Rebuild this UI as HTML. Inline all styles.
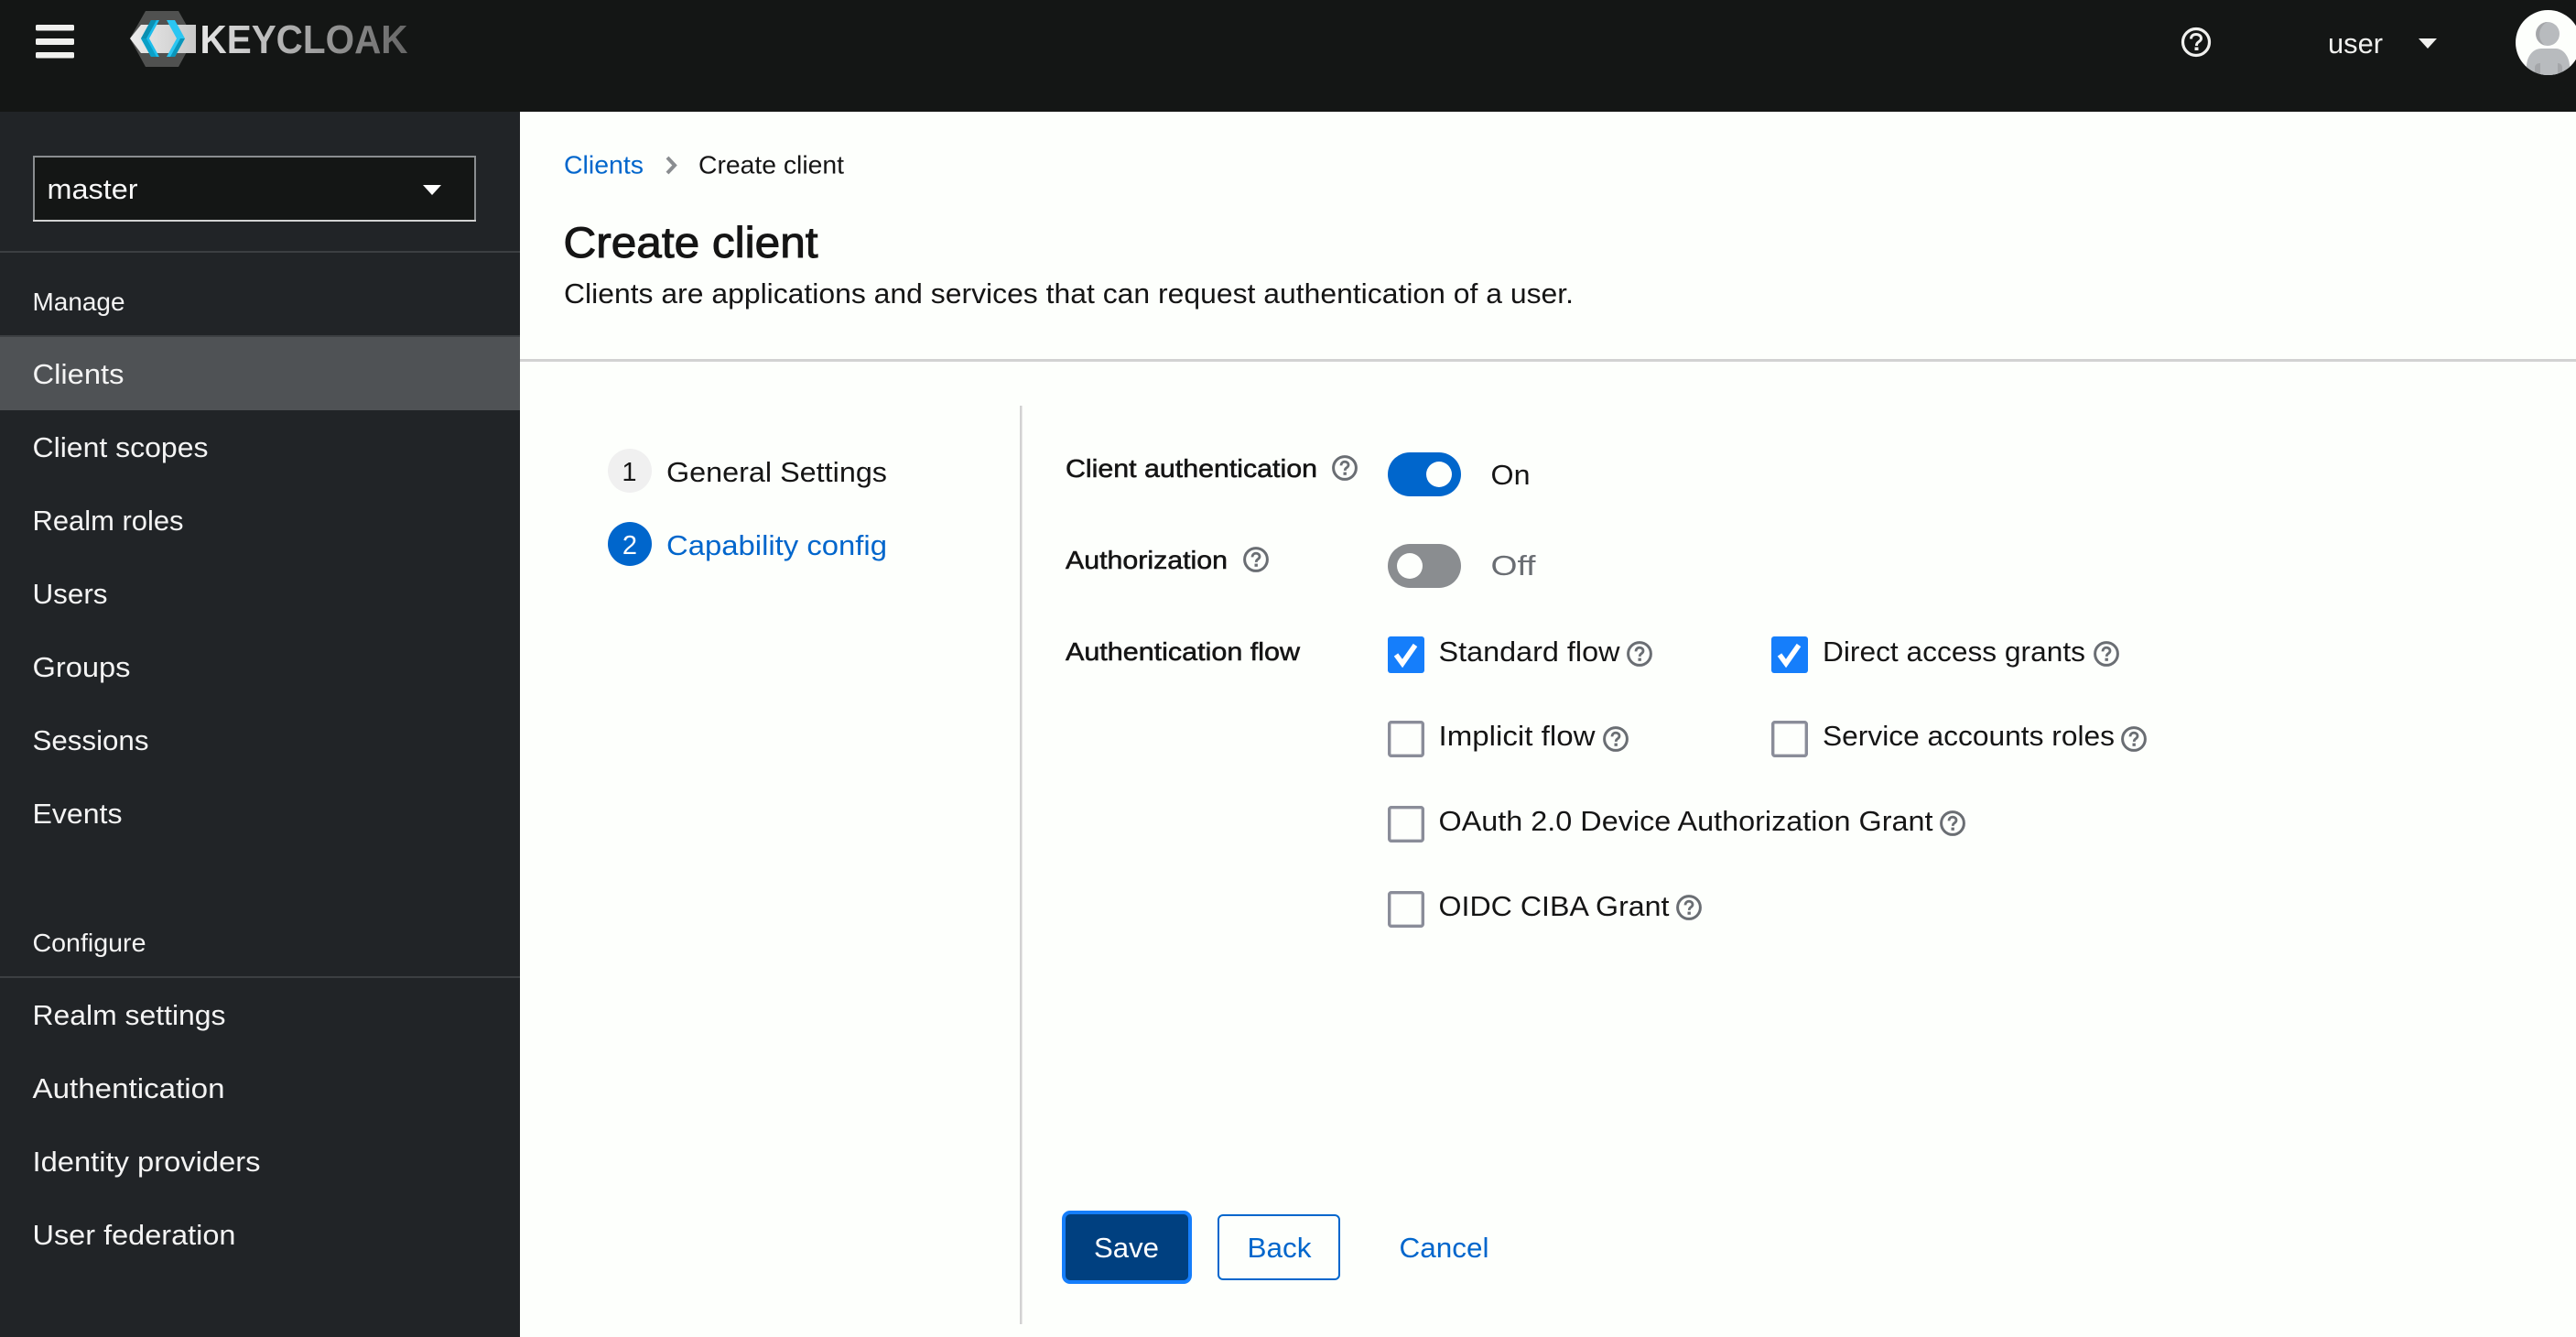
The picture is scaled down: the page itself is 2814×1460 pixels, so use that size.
<!DOCTYPE html>
<html lang="en">
<head>
<meta charset="utf-8">
<title>Create client - Keycloak</title>
<style>
html,body{margin:0;padding:0;background:#fdfffc;width:2814px;height:1460px;overflow:hidden}
svg{display:block}
text{font-family:"Liberation Sans",Arial,sans-serif;font-size:31px;fill:#151515;white-space:pre}
.nav{fill:#f4f4f4;font-size:31px}
.sec{fill:#f4f4f4;font-size:27.500px}
.lbl{font-size:28px;stroke:#151515;stroke-width:.55px}
.blue{fill:#0066cc}
.crumb{font-size:28px}
</style>
</head>
<body>
<svg xmlns="http://www.w3.org/2000/svg" width="2814" height="1460" viewBox="0 0 2814 1460">
<defs>
<linearGradient id="kc" gradientUnits="userSpaceOnUse" x1="218" y1="0" x2="445" y2="0">
<stop offset="0" stop-color="#e6e6e6"/><stop offset=".45" stop-color="#acacac"/><stop offset="1" stop-color="#666"/>
</linearGradient>
<linearGradient id="band" gradientUnits="userSpaceOnUse" x1="142" y1="0" x2="214" y2="0">
<stop offset="0" stop-color="#ececec"/><stop offset="1" stop-color="#c8c8c8"/>
</linearGradient>
<clipPath id="av"><circle cx="2783.5" cy="46.5" r="35.5"/></clipPath>
<symbol id="help" viewBox="-14 -14 28 28" overflow="visible">
<circle r="12.400" fill="none" stroke="#6a6e73" stroke-width="3"/>
<path d="M-4-2.600C-4-5.400-2-6.800 0-6.800 2.300-6.800 4-5.300 4-3.200 4-.8 1.500-.3 .7 1.100 .4 1.600 .3 2.200 .3 2.900" fill="none" stroke="#6a6e73" stroke-width="2.800"/>
<rect x="-1.500" y="4.600" width="3.400" height="3.200" fill="#6a6e73"/>
</symbol>
</defs>

<!-- main background -->
<rect width="2814" height="1460" fill="#fdfffc"/>

<!-- masthead -->
<rect width="2814" height="122" fill="#141615"/>
<rect x="39" y="27" width="42" height="6.500" rx="1.500" fill="#f0f0ee"/>
<rect x="39" y="42" width="42" height="7" rx="1.500" fill="#f0f0ee"/>
<rect x="39" y="57" width="42" height="6.500" rx="1.500" fill="#f0f0ee"/>

<!-- logo -->
<polygon points="159,12 195,12 212,42 195,73 159,73 142,42" fill="#505150"/>
<polygon points="142,42 154,27 214,27 214,58 154,58" fill="url(#band)"/>
<polygon points="165,22 174,22 163,42 174,62 165,62 154,42" fill="#1cbdec"/>
<polygon points="165,22 171,22 160,42 154,42" fill="#0a8fb2"/>
<polygon points="154,42 160,42 171,62 165,62" fill="#0a9fc6"/>
<polygon points="182,22 191,22 202,42 191,62 182,62 193,42" fill="#2ac6f2"/>
<polygon points="186,62 191,62 202,42 197,42" fill="#0a95ba"/>
<text x="218.500" y="58" textLength="227" lengthAdjust="spacingAndGlyphs" style="fill:url(#kc);font-size:44px;font-weight:700">KEYCLOAK</text>

<!-- masthead right -->
<circle cx="2399" cy="46" r="14.500" fill="none" stroke="#f0f0ee" stroke-width="3.200"/>
<path d="M2393.500 42.500C2393.500 39 2396 37.500 2399 37.500 2402 37.500 2404.500 39.300 2404.500 42 2404.500 45 2401 45.500 2400 47.500 2399.600 48.300 2399.500 49 2399.500 50" fill="none" stroke="#f0f0ee" stroke-width="3"/>
<rect x="2397.500" y="51.500" width="4" height="3.500" fill="#f0f0ee"/>
<text x="2543" y="58" textLength="60" lengthAdjust="spacingAndGlyphs" style="fill:#f0f0ee">user</text>
<polygon points="2642,42 2662,42 2652,53" fill="#f0f0ee"/>
<circle cx="2783.500" cy="46.500" r="35.500" fill="#fdfffc"/>
<g clip-path="url(#av)">
<circle cx="2783" cy="37" r="13" fill="#b8bbbe"/>
<path d="M2783 24a13 13 0 0 0-3 25.600 15 15 0 0 1 3-25.600z" fill="#a4a6a9"/>
<path d="M2760 84V71C2761 60 2768 53 2776 53H2792C2799 53 2806 60 2807 71V84z" fill="#b8bbbe"/>
<path d="M2769 82V74C2769 71 2771 69 2775 69V84zM2799 82V74C2799 71 2797 69 2794 69V84z" fill="#a4a6a9"/>
</g>

<!-- sidebar -->
<rect y="122" width="568" height="1338" fill="#212427"/>
<rect x="37" y="171" width="482" height="70" fill="#141615" stroke="#8a8d90" stroke-width="2"/>
<rect x="36" y="240" width="484" height="2" fill="#d2d2d2"/>
<text x="51.500" y="217" textLength="99" lengthAdjust="spacingAndGlyphs" style="fill:#f8f8f8">master</text>
<polygon points="462,202 482,202 472,213" fill="#fff"/>
<rect y="274" width="568" height="2" fill="#3c3f42"/>
<text class="sec" x="35.500" y="339" textLength="101" lengthAdjust="spacingAndGlyphs">Manage</text>
<rect y="366" width="568" height="2" fill="#3c3f42"/>
<rect y="368" width="568" height="80" fill="#4f5255"/>
<text class="nav" x="35.500" y="419" textLength="100" lengthAdjust="spacingAndGlyphs">Clients</text>
<text class="nav" x="35.500" y="499" textLength="192" lengthAdjust="spacingAndGlyphs">Client scopes</text>
<text class="nav" x="35.500" y="579" textLength="165" lengthAdjust="spacingAndGlyphs">Realm roles</text>
<text class="nav" x="35.500" y="659" textLength="82" lengthAdjust="spacingAndGlyphs">Users</text>
<text class="nav" x="35.500" y="739" textLength="107" lengthAdjust="spacingAndGlyphs">Groups</text>
<text class="nav" x="35.500" y="819" textLength="127" lengthAdjust="spacingAndGlyphs">Sessions</text>
<text class="nav" x="35.500" y="899" textLength="98" lengthAdjust="spacingAndGlyphs">Events</text>
<text class="sec" x="35.500" y="1039" textLength="124" lengthAdjust="spacingAndGlyphs">Configure</text>
<rect y="1066" width="568" height="2" fill="#3c3f42"/>
<text class="nav" x="35.500" y="1119" textLength="211" lengthAdjust="spacingAndGlyphs">Realm settings</text>
<text class="nav" x="35.500" y="1199" textLength="210" lengthAdjust="spacingAndGlyphs">Authentication</text>
<text class="nav" x="35.500" y="1279" textLength="249" lengthAdjust="spacingAndGlyphs">Identity providers</text>
<text class="nav" x="35.500" y="1359" textLength="222" lengthAdjust="spacingAndGlyphs">User federation</text>

<!-- page header -->
<text class="crumb blue" x="616" y="189.500" textLength="87" lengthAdjust="spacingAndGlyphs">Clients</text>
<path d="M729 172l8 8.500-8 8.500" fill="none" stroke="#8a8d90" stroke-width="4"/>
<text class="crumb" x="763" y="189.500" textLength="159" lengthAdjust="spacingAndGlyphs">Create client</text>
<text x="615.500" y="281" textLength="278" lengthAdjust="spacingAndGlyphs" style="font-size:47px;stroke:#151515;stroke-width:1px">Create client</text>
<text x="616" y="331" textLength="1103" lengthAdjust="spacingAndGlyphs">Clients are applications and services that can request authentication of a user.</text>
<rect x="568" y="392" width="2246" height="3" fill="#d2d2d2"/>

<!-- wizard nav -->
<circle cx="688" cy="514" r="24" fill="#f0f0f0"/>
<text x="687.500" y="525" text-anchor="middle" style="font-size:29px">1</text>
<text x="728" y="526" textLength="241" lengthAdjust="spacingAndGlyphs" style="font-size:31px">General Settings</text>
<circle cx="688" cy="594" r="24" fill="#0066cc"/>
<text x="688" y="605" text-anchor="middle" style="font-size:29px;fill:#fff">2</text>
<text class="blue" x="728" y="606" textLength="241" lengthAdjust="spacingAndGlyphs" style="font-size:31px">Capability config</text>
<rect x="1114" y="443" width="2.500" height="1003" fill="#d2d2d2"/>

<!-- Form: toggles -->
<text class="lbl" x="1164" y="521" textLength="275" lengthAdjust="spacingAndGlyphs">Client authentication</text>
<use href="#help" x="1455" y="497" width="28" height="28"/>
<rect x="1516" y="494" width="80" height="48" rx="24" fill="#0066cc"/>
<circle cx="1572" cy="518" r="14" fill="#fdfffc"/>
<text x="1628.500" y="529" textLength="43" lengthAdjust="spacingAndGlyphs">On</text>

<text class="lbl" x="1164" y="621" textLength="177" lengthAdjust="spacingAndGlyphs">Authorization</text>
<use href="#help" x="1358" y="597" width="28" height="28"/>
<rect x="1516" y="594" width="80" height="48" rx="24" fill="#8a8d90"/>
<circle cx="1540" cy="618" r="14" fill="#fdfffc"/>
<text x="1628.500" y="628" textLength="49" lengthAdjust="spacingAndGlyphs" style="fill:#6a6e73">Off</text>

<text class="lbl" x="1164" y="721" textLength="256" lengthAdjust="spacingAndGlyphs">Authentication flow</text>

<!-- Checkboxes -->
<rect x="1516" y="695" width="40" height="40" rx="3" fill="#157efb"/>
<path d="M1525 715l7 9.500 14-20" fill="none" stroke="#fff" stroke-width="5.500"/>
<text x="1571.500" y="722" textLength="198" lengthAdjust="spacingAndGlyphs">Standard flow</text>
<use href="#help" x="1777" y="700" width="28" height="28"/>

<rect x="1935" y="695" width="40" height="40" rx="3" fill="#157efb"/>
<path d="M1944 715l7 9.500 14-20" fill="none" stroke="#fff" stroke-width="5.500"/>
<text x="1991" y="722" textLength="287" lengthAdjust="spacingAndGlyphs">Direct access grants</text>
<use href="#help" x="2287" y="700" width="28" height="28"/>

<rect x="1517.700" y="788.700" width="36.600" height="36.600" rx="2" fill="none" stroke="#8a8d99" stroke-width="3.400"/>
<text x="1571.500" y="814" textLength="171" lengthAdjust="spacingAndGlyphs">Implicit flow</text>
<use href="#help" x="1751" y="793" width="28" height="28"/>

<rect x="1936.700" y="788.700" width="36.600" height="36.600" rx="2" fill="none" stroke="#8a8d99" stroke-width="3.400"/>
<text x="1991" y="814" textLength="319" lengthAdjust="spacingAndGlyphs">Service accounts roles</text>
<use href="#help" x="2317" y="793" width="28" height="28"/>

<rect x="1517.700" y="881.700" width="36.600" height="36.600" rx="2" fill="none" stroke="#8a8d99" stroke-width="3.400"/>
<text x="1571.500" y="907" textLength="540" lengthAdjust="spacingAndGlyphs">OAuth 2.0 Device Authorization Grant</text>
<use href="#help" x="2119" y="885" width="28" height="28"/>

<rect x="1517.700" y="974.700" width="36.600" height="36.600" rx="2" fill="none" stroke="#8a8d99" stroke-width="3.400"/>
<text x="1571.500" y="1000" textLength="252" lengthAdjust="spacingAndGlyphs">OIDC CIBA Grant</text>
<use href="#help" x="1831" y="977" width="28" height="28"/>

<!-- Buttons -->
<rect x="1162" y="1324" width="138" height="76" rx="7" fill="#004080" stroke="#157efb" stroke-width="4"/>
<text x="1195" y="1373" textLength="71" lengthAdjust="spacingAndGlyphs" style="font-size:31px;fill:#fff">Save</text>
<rect x="1331" y="1327" width="132" height="70" rx="5" fill="#fdfffc" stroke="#0066cc" stroke-width="2"/>
<text class="blue" x="1362.500" y="1373" textLength="70" lengthAdjust="spacingAndGlyphs" style="font-size:31px">Back</text>
<text class="blue" x="1528.500" y="1373" textLength="98" lengthAdjust="spacingAndGlyphs" style="font-size:31px">Cancel</text>
</svg>
</body>
</html>
